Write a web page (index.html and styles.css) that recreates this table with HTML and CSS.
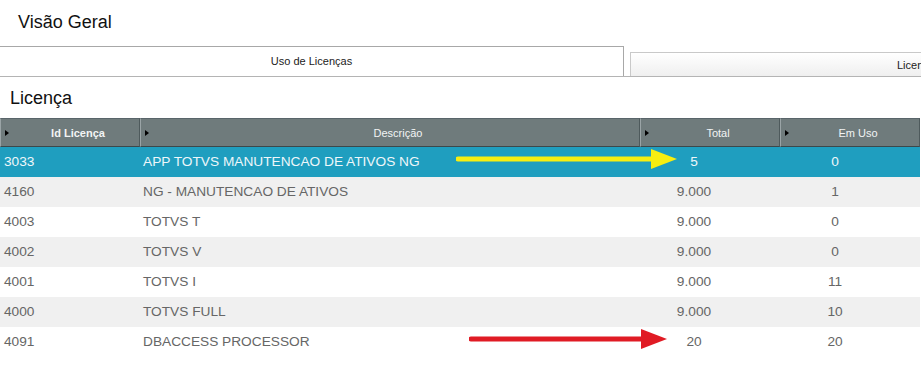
FILE: index.html
```html
<!DOCTYPE html>
<html lang="pt">
<head>
<meta charset="utf-8">
<link rel="stylesheet" href="styles.css">
</head>
<body>
<div class="page">
  <div class="title">Visão Geral</div>
  <div class="tabs">
    <div class="tab tab-active">Uso de Licenças</div>
    <div class="tab tab-other">Licenças em Uso por Usuário</div>
  </div>
  <div class="section">Licença</div>
  <div class="grid">
    <div class="hcell"><span class="tri"></span><span class="htext bold">Id Licença</span></div>
    <div class="hcell"><span class="tri"></span><span class="htext">Descrição</span></div>
    <div class="hcell"><span class="tri"></span><span class="htext">Total</span></div>
    <div class="hcell"><span class="tri"></span><span class="htext">Em Uso</span></div>

    <div class="row sel">
      <div class="c id">3033</div><div class="c desc">APP TOTVS MANUTENCAO DE ATIVOS NG</div><div class="c tot">5</div><div class="c use">0</div>
    </div>
    <div class="row alt">
      <div class="c id">4160</div><div class="c desc">NG - MANUTENCAO DE ATIVOS</div><div class="c tot">9.000</div><div class="c use">1</div>
    </div>
    <div class="row">
      <div class="c id">4003</div><div class="c desc">TOTVS T</div><div class="c tot">9.000</div><div class="c use">0</div>
    </div>
    <div class="row alt">
      <div class="c id">4002</div><div class="c desc">TOTVS V</div><div class="c tot">9.000</div><div class="c use">0</div>
    </div>
    <div class="row">
      <div class="c id">4001</div><div class="c desc">TOTVS I</div><div class="c tot">9.000</div><div class="c use">11</div>
    </div>
    <div class="row alt">
      <div class="c id">4000</div><div class="c desc">TOTVS FULL</div><div class="c tot">9.000</div><div class="c use">10</div>
    </div>
    <div class="row">
      <div class="c id">4091</div><div class="c desc">DBACCESS PROCESSOR</div><div class="c tot">20</div><div class="c use">20</div>
    </div>
  </div>

  <svg class="arrow arrow-yellow" width="230" height="24" viewBox="0 0 230 24">
    <line x1="2" y1="11" x2="198" y2="11" stroke="#f7ee11" stroke-width="5" stroke-linecap="round"/>
    <polygon points="195,1 221,11 195,21" fill="#f7ee11"/>
  </svg>
  <svg class="arrow arrow-red" width="210" height="24" viewBox="0 0 210 24">
    <line x1="2" y1="12" x2="175" y2="12" stroke="#e01b24" stroke-width="5" stroke-linecap="round"/>
    <polygon points="172,2 198,12 172,22" fill="#e01b24"/>
  </svg>
</div>
</body>
</html>
```

FILE: styles.css
```css
* { box-sizing: border-box; }
html, body {
  margin: 0;
  padding: 0;
  background: #ffffff;
  overflow: hidden;
}
body {
  font-family: "Liberation Sans", Arial, sans-serif;
  color: #222;
}
.page {
  position: relative;
  width: 921px;
  height: 390px;
}
.title {
  height: 46px;
  padding-left: 18px;
  padding-top: 11px;
  font-size: 18px;
  line-height: 22px;
  color: #111;
}
.tabs {
  display: flex;
  height: 31px;
  border-bottom: 1px solid #b4b4b4;
  overflow: hidden;
  white-space: nowrap;
}
.tab {
  font-size: 11px;
  color: #222;
}
.tab-active {
  flex: 0 0 624px;
  border-top: 1px solid #a8a8a8;
  border-right: 1px solid #a8a8a8;
  text-align: center;
  padding-top: 8px;
  background: #fff;
}
.tab-other {
  flex: 0 0 620px;
  margin-left: 6px;
  margin-top: 6px;
  border: 1px solid #c9c9c9;
  border-bottom: none;
  background: linear-gradient(#ffffff, #efefef);
  padding-left: 266px;
  padding-top: 6px;
}
.section {
  height: 41px;
  padding-left: 10px;
  padding-top: 10px;
  font-size: 18px;
  line-height: 22px;
  color: #111;
}
.grid {
  display: grid;
  grid-template-columns: 140px 500px 140px 140px;
  width: 920px;
}
.hcell {
  position: relative;
  height: 29px;
  background: #6f7b7c;
  border-top: 1px solid #59656a;
  border-bottom: 1px solid #3c484b;
  border-left: 1px solid #9aa4a6;
  border-right: 1px solid #4e5a5c;
  display: flex;
  align-items: center;
  justify-content: center;
  padding-left: 16px;
  font-size: 11px;
  color: #f2f4f4;
}
.hcell .bold { font-weight: bold; }
.tri {
  position: absolute;
  left: 4px;
  top: 11px;
  width: 0;
  height: 0;
  border-top: 3.5px solid transparent;
  border-bottom: 3.5px solid transparent;
  border-left: 4px solid #000;
}
.row {
  display: contents;
}
.c {
  height: 30px;
  line-height: 30px;
  font-size: 13.7px;
  color: #666;
  background: #fff;
  white-space: nowrap;
}
.row.alt .c { background: #f0f0f0; }
.row.sel .c { background: #1f9ebf; color: #eef7fa; }
.id { padding-left: 4px; }
.desc { padding-left: 3px; }
.tot { text-align: center; padding-right: 32px; }
.use { text-align: center; padding-right: 30px; }
.arrow {
  position: absolute;
}
.arrow-yellow {
  left: 456px;
  top: 148px;
}
.arrow-red {
  left: 469px;
  top: 327px;
}
```
